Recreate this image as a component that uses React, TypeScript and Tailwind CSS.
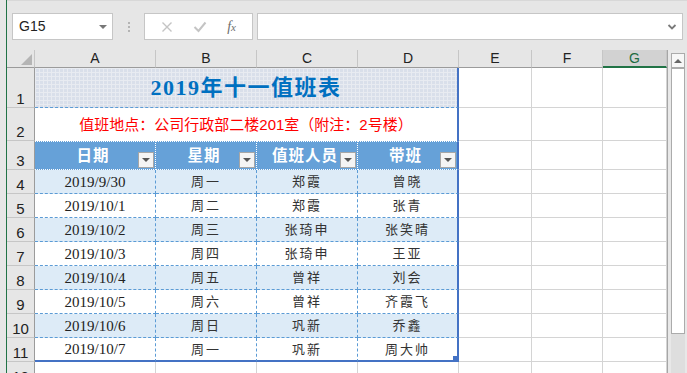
import React from 'react'

const rows = [
    ['2019/9/30', '周一', '郑霞', '曾晓'],
    ['2019/10/1', '周二', '郑霞', '张青'],
    ['2019/10/2', '周三', '张琦申', '张笑晴'],
    ['2019/10/3', '周四', '张琦申', '王亚'],
    ['2019/10/4', '周五', '曾祥', '刘会'],
    ['2019/10/5', '周六', '曾祥', '齐霞飞'],
    ['2019/10/6', '周日', '巩新', '乔鑫'],
    ['2019/10/7', '周一', '巩新', '周大帅'],
]

function RowNum({ n }: { n: string }) {
    return (
        <div className="w-[28px] shrink-0 h-full bg-[#e6e6e6] border-r border-r-[#9b9b9b] border-b border-b-[#c6c6c6] flex items-end justify-center pb-[1px] text-[15px] leading-none text-[#222]">
            {n}
        </div>
    )
}

function Empty() {
    return (
        <>
            <div className="w-[73px] shrink-0 h-full bg-white border-r border-b border-[#d4d4d4]" />
            <div className="w-[71px] shrink-0 h-full bg-white border-r border-b border-[#d4d4d4]" />
            <div className="w-[64px] shrink-0 h-full bg-white border-r border-b border-[#d4d4d4]" />
        </>
    )
}

function Filter() {
    return (
        <div className="absolute right-[1px] bottom-[1px] w-[16px] h-[16px] bg-[#f4f4f4] border border-[#a6a6a6] flex items-center justify-center">
            <div className="w-0 h-0 border-l-[4px] border-r-[4px] border-t-[4px] border-l-transparent border-r-transparent border-t-[#555]" />
        </div>
    )
}

export default function App() {
    return (
        <div className="w-[687px] h-[373px] overflow-hidden flex bg-[#e6e6e6] font-['Liberation_Sans','Noto_Sans_CJK_SC',sans-serif]">
            {/* window edge */}
            <div className="w-[7px] shrink-0 h-full bg-[#e6e6e6] border-r border-r-[#217346]" />

            <div className="flex-1 flex flex-col">
                {/* formula bar */}
                <div className="h-[50px] shrink-0 flex items-start pt-[12px] pl-[5px] border-t border-t-[#d8d8d8]">
                    <div className="w-[101px] h-[27px] bg-white border border-[#c6c6c6] flex items-center justify-between pl-[6px] pr-[5px]">
                        <span className="text-[14px] text-[#222]">G15</span>
                        <div className="w-0 h-0 border-l-[4px] border-r-[4px] border-t-[4px] border-l-transparent border-r-transparent border-t-[#777]" />
                    </div>
                    <div className="w-[31px] h-[27px] flex flex-col items-center justify-center gap-[2px]">
                        <div className="w-[2px] h-[2px] bg-[#b4b4b4]" />
                        <div className="w-[2px] h-[2px] bg-[#b4b4b4]" />
                        <div className="w-[2px] h-[2px] bg-[#b4b4b4]" />
                    </div>
                    <div className="w-[109px] h-[27px] bg-white border border-[#c6c6c6] flex items-center justify-around px-[6px]">
                        <svg width="12" height="12" viewBox="0 0 12 12" fill="none" stroke="#c4c4c4" strokeWidth="1.4">
                            <path d="M1.5 1.5 L10.5 10.5 M10.5 1.5 L1.5 10.5" />
                        </svg>
                        <svg width="14" height="12" viewBox="0 0 14 12" fill="none" stroke="#c4c4c4" strokeWidth="2">
                            <path d="M1.5 6 L5.5 10 L12.5 1.5" />
                        </svg>
                        <span className="font-['Liberation_Serif',serif] italic text-[14px] text-[#6d6d6d] leading-none">
                            f<span className="text-[11px]">x</span>
                        </span>
                    </div>
                    <div className="ml-[4px] w-[426px] h-[27px] bg-white border border-[#c6c6c6] flex items-center justify-end pr-[5px]">
                        <svg width="10" height="8" viewBox="0 0 10 8" fill="none" stroke="#7a7a7a" strokeWidth="1.8">
                            <path d="M1.5 2 L5 5.5 L8.5 2" />
                        </svg>
                    </div>
                </div>

                <div className="flex-1 flex">
                    {/* sheet */}
                    <div className="w-[660px] shrink-0 flex flex-col">
                        {/* column headers */}
                        <div className="h-[18px] shrink-0 flex text-[14px] text-[#222]">
                            <div className="w-[28px] shrink-0 h-full bg-[#e6e6e6] border-r border-r-[#c6c6c6] border-b border-b-[#9b9b9b] flex items-end justify-end p-[2px]">
                                <div className="w-0 h-0 border-l-[11px] border-b-[11px] border-l-transparent border-b-[#b5b5b5]" />
                            </div>
                            <div className="w-[121px] shrink-0 h-full border-r border-r-[#c6c6c6] border-b border-b-[#9b9b9b] flex items-center justify-center">A</div>
                            <div className="w-[101px] shrink-0 h-full border-r border-r-[#c6c6c6] border-b border-b-[#9b9b9b] flex items-center justify-center">B</div>
                            <div className="w-[101px] shrink-0 h-full border-r border-r-[#c6c6c6] border-b border-b-[#9b9b9b] flex items-center justify-center">C</div>
                            <div className="w-[101px] shrink-0 h-full border-r border-r-[#c6c6c6] border-b border-b-[#9b9b9b] flex items-center justify-center">D</div>
                            <div className="w-[73px] shrink-0 h-full border-r border-r-[#c6c6c6] border-b border-b-[#9b9b9b] flex items-center justify-center">E</div>
                            <div className="w-[71px] shrink-0 h-full border-r border-r-[#c6c6c6] border-b border-b-[#9b9b9b] flex items-center justify-center">F</div>
                            <div className="w-[64px] shrink-0 h-full bg-[#d2d2d2] border-r border-r-[#c6c6c6] border-b-2 border-b-[#217346] flex items-center justify-center text-[#1e6b41]">G</div>
                        </div>

                        {/* row 1: title */}
                        <div className="h-[40px] shrink-0 flex">
                            <RowNum n="1" />
                            <div className="w-[424px] shrink-0 h-full bg-[#d9dfea] bg-[image:linear-gradient(90deg,#e8ebf1_1px,transparent_1px),linear-gradient(#e8ebf1_1px,transparent_1px)] bg-[length:4px_4px] border-b border-dashed border-b-[#5b9bd5] border-r-2 [border-right-style:solid] border-r-[#4472c4] flex items-center justify-center">
                                <span className="font-['Liberation_Serif','Noto_Sans_CJK_SC',serif] font-bold text-[22px] tracking-[1.5px] text-[#0070c0]">2019年十一值班表</span>
                            </div>
                            <Empty />
                        </div>

                        {/* row 2: note */}
                        <div className="h-[33px] shrink-0 flex">
                            <RowNum n="2" />
                            <div className="w-[424px] shrink-0 h-full bg-white border-r-2 border-r-[#4472c4] flex items-center justify-center pt-[2px]">
                                <span className="text-[15px] text-[#ff0000]">值班地点：公司行政部二楼201室（附注：2号楼）</span>
                            </div>
                            <Empty />
                        </div>

                        {/* row 3: header */}
                        <div className="h-[29px] shrink-0 flex">
                            <RowNum n="3" />
                            {['日期', '星期', '值班人员', '带班'].map((t, i) => (
                                <div
                                    key={t}
                                    className={
                                        i === 0
                                            ? 'relative w-[121px] shrink-0 h-full bg-[#66a1d8] border-t border-b border-r border-dotted border-white flex items-center justify-center pr-[4px] text-white font-bold text-[15.5px] tracking-[1px]'
                                            : i === 3
                                            ? 'relative w-[101px] shrink-0 h-full bg-[#66a1d8] border-t border-b border-dotted border-white border-r-2 [border-right-style:solid] border-r-[#4472c4] flex items-center justify-center pr-[4px] text-white font-bold text-[15.5px] tracking-[1px]'
                                            : 'relative w-[101px] shrink-0 h-full bg-[#66a1d8] border-t border-b border-r border-dotted border-white flex items-center justify-center pr-[4px] text-white font-bold text-[15.5px] tracking-[1px]'
                                    }
                                >
                                    {t}
                                    <Filter />
                                </div>
                            ))}
                            <Empty />
                        </div>

                        {/* data rows */}
                        {rows.map((r, idx) => {
                            const last = idx === rows.length - 1
                            const bg = idx % 2 === 0 ? 'bg-[#ddebf7]' : 'bg-white'
                            const bottom = last
                                ? 'border-b-2 [border-bottom-style:solid] border-b-[#4472c4]'
                                : 'border-b border-b-[#5b9bd5]'
                            return (
                                <div key={idx} className="h-[24px] shrink-0 flex">
                                    <RowNum n={String(idx + 4)} />
                                    <div className={`w-[121px] shrink-0 h-full ${bg} border-r border-dashed border-r-[#5b9bd5] ${bottom} flex items-center justify-center pt-[1px] font-['Liberation_Serif',serif] text-[15px] text-[#222]`}>
                                        {r[0]}
                                    </div>
                                    <div className={`w-[101px] shrink-0 h-full ${bg} border-r border-dashed border-r-[#5b9bd5] ${bottom} flex items-center justify-center pt-[1px] text-[13px] tracking-[2px] text-[#333]`}>
                                        {r[1]}
                                    </div>
                                    <div className={`w-[101px] shrink-0 h-full ${bg} border-r border-dashed border-r-[#5b9bd5] ${bottom} flex items-center justify-center pt-[1px] text-[13px] tracking-[2px] text-[#333]`}>
                                        {r[2]}
                                    </div>
                                    <div className={`relative w-[101px] shrink-0 h-full ${bg} border-dashed border-r-2 [border-right-style:solid] border-r-[#4472c4] ${bottom} flex items-center justify-center pt-[1px] text-[13px] tracking-[2px] text-[#333]`}>
                                        {r[3]}
                                        {last && <div className="absolute right-0 bottom-0 w-[4px] h-[4px] bg-[#4472c4]" />}
                                    </div>
                                    <Empty />
                                </div>
                            )
                        })}

                        {/* row 12 */}
                        <div className="h-[24px] shrink-0 flex">
                            <RowNum n="12" />
                            <div className="w-[121px] shrink-0 h-full bg-white border-r border-b border-[#d4d4d4]" />
                            <div className="w-[101px] shrink-0 h-full bg-white border-r border-b border-[#d4d4d4]" />
                            <div className="w-[101px] shrink-0 h-full bg-white border-r border-b border-[#d4d4d4]" />
                            <div className="w-[101px] shrink-0 h-full bg-white border-r border-b border-[#d4d4d4]" />
                            <Empty />
                        </div>
                    </div>

                    {/* vertical scrollbar */}
                    <div className="flex-1 flex flex-col border-l border-l-[#a6a6a6] bg-[#e8e8e8] pl-[3px] pr-[2px] pt-[3px]">
                        <div className="w-[14px] h-[15px] shrink-0 bg-[#f7f7f7] border border-[#ababab] flex items-center justify-center">
                            <div className="w-0 h-0 border-l-[4px] border-r-[4px] border-b-[4px] border-l-transparent border-r-transparent border-b-[#666]" />
                        </div>
                        <div className="w-[14px] h-[266px] shrink-0 bg-white border border-[#ababab]" />
                        <div className="w-[14px] flex-1 bg-[#dedede]" />
                    </div>
                </div>
            </div>
        </div>
    )
}
